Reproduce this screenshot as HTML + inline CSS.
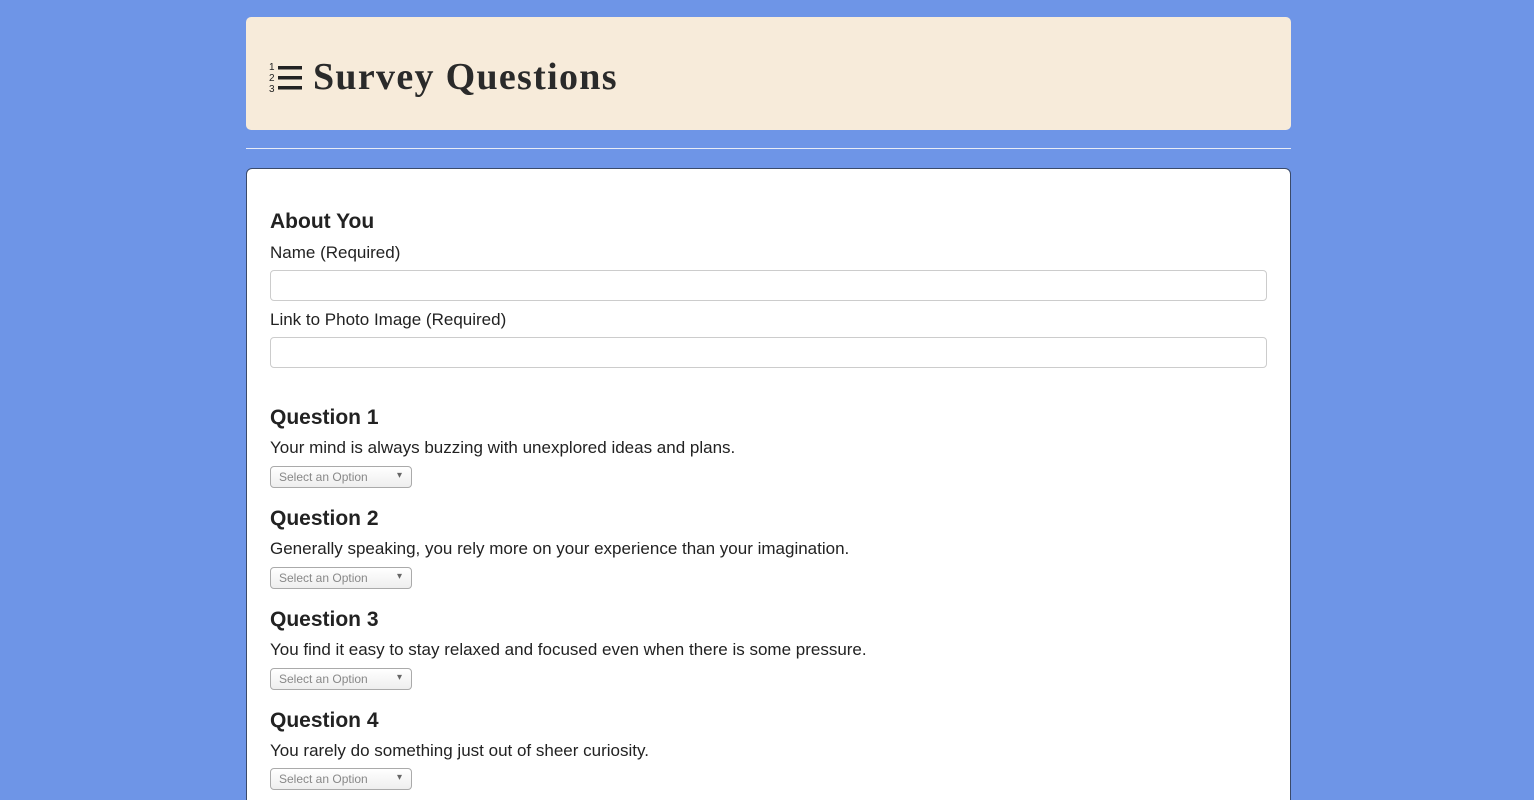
<!DOCTYPE html>
<html><head><style>
html,body{margin:0;height:800px;overflow:hidden}
body{background:#6e95e7;font-family:"Liberation Sans",sans-serif;color:#222;position:relative}
.hdr{position:absolute;left:246px;top:17px;width:1045px;height:113px;background:#f7ebda;border-radius:5px}
.hdr h1{position:absolute;left:67px;top:38px;margin:0;font-family:"Liberation Serif",serif;font-size:38px;font-weight:bold;color:#2a2a2a;letter-spacing:1.3px}
.hr{position:absolute;left:246px;top:148px;width:1045px;height:1px;background:#e8ecf7}
.card{position:absolute;left:246px;top:168px;width:1043px;height:640px;background:#fff;border:1px solid #3a4a6a;border-radius:6px}
.c{position:absolute;left:23px;width:997px}
h2{margin:0;font-size:21px;font-weight:bold;color:#222}
.t{font-size:17px;color:#222}
.inp{border:1px solid #ccc;border-radius:4px;box-sizing:border-box;height:31px;width:997px}
.sel{width:142px;height:22px;border:1px solid #aaa;border-radius:4px;box-sizing:border-box;background:linear-gradient(#fff,#eee);font-size:12px;color:#888;padding:3px 0 0 8px;position:relative}
.sel:after{content:"▾";position:absolute;right:9px;top:3px;font-size:10px;color:#666}
</style></head><body>
<div class="hdr">
<svg style="position:absolute;left:23px;top:44px" width="34" height="32" viewBox="0 0 34 32">
<text x="0" y="9" font-size="10" font-family="Liberation Sans" fill="#222">1</text>
<text x="0" y="20" font-size="10" font-family="Liberation Sans" fill="#222">2</text>
<text x="0" y="31" font-size="10" font-family="Liberation Sans" fill="#222">3</text>
<rect x="9" y="5" width="24" height="3.5" fill="#222"/><rect x="9" y="15" width="24" height="3.5" fill="#222"/><rect x="9" y="25" width="24" height="3.5" fill="#222"/>
</svg>
<h1>Survey Questions</h1>
</div>
<div class="hr"></div>
<div class="card">
<div class="c" style="top:41px"><h2>About You</h2></div>
<div class="c t" style="top:74px">Name (Required)</div>
<div class="c" style="top:101px"><div class="inp"></div></div>
<div class="c t" style="top:141px">Link to Photo Image (Required)</div>
<div class="c" style="top:168px"><div class="inp"></div></div>
<div class="c" style="top:237px"><h2>Question 1</h2></div>
<div class="c t" style="top:269px">Your mind is always buzzing with unexplored ideas and plans.</div>
<div class="c" style="top:297px"><div class="sel">Select an Option</div></div>
<div class="c" style="top:338px"><h2>Question 2</h2></div>
<div class="c t" style="top:370px">Generally speaking, you rely more on your experience than your imagination.</div>
<div class="c" style="top:398px"><div class="sel">Select an Option</div></div>
<div class="c" style="top:439px"><h2>Question 3</h2></div>
<div class="c t" style="top:471px">You find it easy to stay relaxed and focused even when there is some pressure.</div>
<div class="c" style="top:499px"><div class="sel">Select an Option</div></div>
<div class="c" style="top:540px"><h2>Question 4</h2></div>
<div class="c t" style="top:572px">You rarely do something just out of sheer curiosity.</div>
<div class="c" style="top:599px"><div class="sel">Select an Option</div></div>
</div>
</body></html>
